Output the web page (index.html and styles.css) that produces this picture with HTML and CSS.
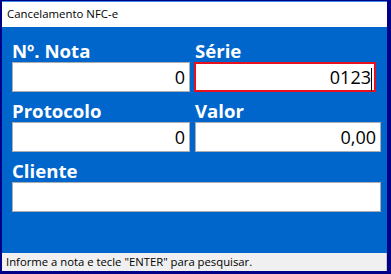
FILE: index.html
```html
<!DOCTYPE html>
<html lang="pt-BR">
<head>
    <meta charset="UTF-8">
    <title>Cancelamento NFC-e</title>
    <link rel="stylesheet" href="styles.css">
</head>
<body>
    <div class="window">
        <div class="title-bar">Cancelamento NFC-e</div>

        <div class="form">
            <div class="field">
                <label>Nº. Nota</label>
                <div class="box">0</div>
            </div>
            <div class="field">
                <label>Série</label>
                <div class="box serie">0123<span class="caret"></span></div>
            </div>
            <div class="field">
                <label>Protocolo</label>
                <div class="box">0</div>
            </div>
            <div class="field">
                <label>Valor</label>
                <div class="box">0,00</div>
            </div>
            <div class="field wide">
                <label>Cliente</label>
                <div class="box"></div>
            </div>
        </div>

        <div class="status-bar">Informe a nota e tecle "ENTER" para pesquisar.</div>
    </div>
</body>
</html>
```

FILE: styles.css
```css
body {
    margin: 0;
    padding: 0;
    font-family: "Open Sans", "Noto Sans", sans-serif;
}
.window {
    width: 391px;
    height: 274px;
    box-sizing: border-box;
    border-style: solid;
    border-color: #000088;
    border-width: 1px 4px 3px 2px;
    background-color: #0066cc;
    display: flex;
    flex-direction: column;
}
.title-bar {
    height: 25px;
    border-top: 1px solid #3d8be0;
    background-color: white;
    color: #000;
    font-size: 11.4px;
    line-height: 24px;
    padding-left: 5px;
}
.form {
    flex: 1;
    padding: 12px 0 0 10px;
    display: grid;
    grid-template-columns: 178px 186px;
    column-gap: 5px;
    row-gap: 7px;
    align-content: start;
}
.field label {
    display: block;
    color: white;
    font-weight: bold;
    font-size: 18.6px;
    line-height: 23px;
}
.field.wide {
    grid-column: 1 / 3;
}
.box {
    height: 30px;
    box-sizing: border-box;
    border: 1px solid #abadb3;
    background-color: white;
    color: #000;
    font-size: 18px;
    line-height: 28px;
    text-align: right;
    padding-right: 4px;
}
.box.serie {
    width: 182px;
    margin-left: -1px;
    border: 2px solid #e8101c;
    line-height: 26px;
    padding-right: 2px;
}
.caret {
    display: inline-block;
    width: 0;
    height: 23px;
    border-left: 1px solid #000;
    vertical-align: middle;
}
.status-bar {
    height: 18px;
    background-color: #f0f0f0;
    border-right: 1px solid #c8c8c8;
    color: #000;
    font-size: 11.3px;
    line-height: 18px;
    padding-left: 4px;
}
```
